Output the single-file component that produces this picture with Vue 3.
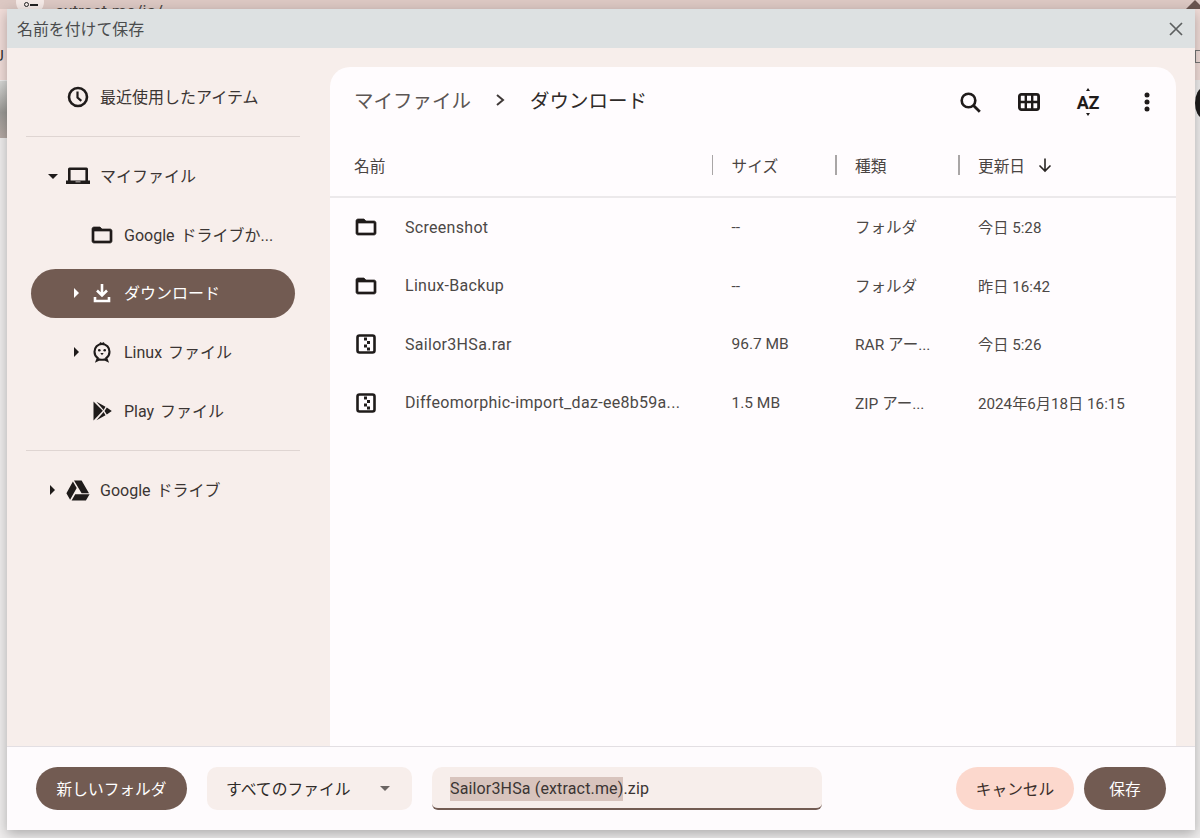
<template>
  <div class="page">
    <!-- browser window behind the dialog -->
    <div class="behind">
      <div class="chrome"></div>
      <div class="url-pill"><span class="url-dot"></span><span class="url-bar"></span></div>
      <div class="url-text">extract.me/ja/</div>
      <div class="left-letter">U</div>
      <div class="left-photo"></div>
      <div class="right-star"></div>
      <div class="right-box"></div>
      <div class="right-bubble"></div>
    </div>

    <div class="dialog">
      <header class="titlebar">
        <span>名前を付けて保存</span>
        <svg class="close" width="16" height="16" viewBox="0 0 16 16">
          <path d="M2 2l12 12M14 2L2 14" stroke="#5c5f60" stroke-width="1.7" fill="none" />
        </svg>
      </header>

      <div class="body">
        <aside class="sidebar">
          <div class="nav-item lvl1">
            <span class="caret"></span>
            <svg class="nav-icon" viewBox="0 0 24 24">
              <circle cx="12" cy="12" r="9" fill="none" stroke="#1f1b1a" stroke-width="2.6" />
              <path d="M11.5 6.500v6l3.800 3.400" fill="none" stroke="#1f1b1a" stroke-width="2.2" />
            </svg>
            <span class="nav-text">最近使用したアイテム</span>
          </div>
          <div class="divider"></div>

          <div class="nav-item lvl1">
            <span class="caret down"></span>
            <svg class="nav-icon" viewBox="0 0 24 24">
              <path fill="#1f1b1a" fill-rule="evenodd" d="M3.500 3.500h17A1.500 1.500 0 0 1 22 5v11.500h2V20H0v-3.500h2V5a1.500 1.500 0 0 1 1.500-1.500zM4.600 6v10.500h14.800V6zM9.500 17.400v.9h5v-.9z" />
            </svg>
            <span class="nav-text">マイファイル</span>
          </div>
          <div class="nav-item lvl2">
            <span class="caret none"></span>
            <svg class="nav-icon" viewBox="0 0 24 24">
              <path fill="#1f1b1a" stroke="#1f1b1a" stroke-width=".7" d="M20 6h-8l-2-2H4c-1.100 0-1.990.9-1.990 2L2 18c0 1.100.9 2 2 2h16c1.100 0 2-.9 2-2V8c0-1.100-.9-2-2-2zm0 12H4V8h16v10z" />
            </svg>
            <span class="nav-text">Google ドライブか...</span>
          </div>
          <div class="nav-item lvl2 active">
            <span class="caret right"></span>
            <svg class="nav-icon" viewBox="0 0 24 24">
              <path d="M12 3v11M7 9.500l5 5 5-5M5 16v4h14v-4" fill="none" stroke="#fff" stroke-width="2.600" />
            </svg>
            <span class="nav-text">ダウンロード</span>
          </div>
          <div class="nav-item lvl2">
            <span class="caret right"></span>
            <svg class="nav-icon" viewBox="0 0 24 24">
              <path d="M12 4c-1 0-1.600-.8-2-1.400M12 4c1 0 1.600-.8 2-1.400M12 4c-4.400 0-7.500 3.400-7.500 7.800 0 2.800 1.300 5 3.300 6.300l-1 2.600 2.900-1.300c1.400.4 3.200.4 4.600 0l2.900 1.300-1-2.600c2-1.300 3.300-3.500 3.300-6.300C19.500 7.400 16.400 4 12 4z" fill="none" stroke="#1f1b1a" stroke-width="2.100" />
              <circle cx="9.300" cy="10.300" r="1.300" fill="#1f1b1a" />
              <circle cx="14.700" cy="10.300" r="1.300" fill="#1f1b1a" />
              <path d="M10.300 13h3.400L12 15.200z" fill="#1f1b1a" />
            </svg>
            <span class="nav-text">Linux ファイル</span>
          </div>
          <div class="nav-item lvl2">
            <span class="caret none"></span>
            <svg class="nav-icon" viewBox="0 0 24 24">
              <path fill="#1f1b1a" d="M3.500 2.500l9.300 9.300-9.300 9.700z" />
              <path fill="#1f1b1a" d="M6.500 2.700l9 5.100-1.900 3.100zM6.500 21.300l9-5.100-1.900-3.100zM16.800 8.600l5 3.400-5 3.400-2.300-3.400z" />
            </svg>
            <span class="nav-text">Play ファイル</span>
          </div>
          <div class="divider"></div>

          <div class="nav-item lvl1">
            <span class="caret right"></span>
            <svg class="nav-icon" viewBox="0 0 24 24">
              <path fill="#1f1b1a" d="M8 2.500h7.600l7.400 12.700h-7.400zM6.900 3.500l3.800 6.600-6.600 11.600L.4 15.300zM9.200 16.300h14.400l-3.700 6.200H5.600z" />
            </svg>
            <span class="nav-text">Google ドライブ</span>
          </div>
        </aside>

        <main class="panel">
          <div class="toolbar">
            <div class="crumbs">
              <span class="crumb-parent">マイファイル</span>
              <svg class="crumb-sep" width="12" height="14" viewBox="0 0 12 14">
                <path d="M2 2l6 5-6 5" fill="none" stroke="#403a38" stroke-width="2" />
              </svg>
              <span class="crumb-current">ダウンロード</span>
            </div>
            <div class="tools">
              <svg class="tool" viewBox="0 0 24 24">
                <circle cx="10.500" cy="10.500" r="6.800" fill="none" stroke="#1f1b1a" stroke-width="2.600" />
                <path d="M15.500 15.500l6.300 6.300" stroke="#1f1b1a" stroke-width="2.800" fill="none" />
              </svg>
              <svg class="tool" viewBox="0 0 24 24">
                <rect x="2.400" y="4.400" width="19.200" height="15.200" rx="2" fill="none" stroke="#1f1b1a" stroke-width="2.800" />
                <path d="M8.800 4v16M15.200 4v16M2 12h20" stroke="#1f1b1a" stroke-width="2.400" fill="none" />
              </svg>
              <div class="tool sort">
                <span class="sort-up"></span>
                <span class="sort-label">AZ</span>
                <span class="sort-down"></span>
              </div>
              <svg class="tool" viewBox="0 0 24 24">
                <circle cx="12" cy="5" r="2.500" fill="#1f1b1a" />
                <circle cx="12" cy="12" r="2.500" fill="#1f1b1a" />
                <circle cx="12" cy="19" r="2.500" fill="#1f1b1a" />
              </svg>
            </div>
          </div>

          <div class="thead">
            <div class="col-name">名前</div>
            <div class="col-size th">サイズ</div>
            <div class="col-type th">種類</div>
            <div class="col-date th">
              更新日
              <svg class="sort-arrow" width="16" height="16" viewBox="0 0 16 16">
                <path d="M8 1.500v12.500M2.500 8.500L8 14l5.500-5.500" fill="none" stroke="#2a2624" stroke-width="1.600" />
              </svg>
            </div>
          </div>

          <div v-for="file in files" :key="file.name" class="row">
            <div class="col-name cell-name">
              <svg v-if="file.folder" class="file-icon" viewBox="0 0 24 24">
                <path fill="#1f1b1a" stroke="#1f1b1a" stroke-width=".7" d="M20 6h-8l-2-2H4c-1.100 0-1.990.9-1.990 2L2 18c0 1.100.9 2 2 2h16c1.100 0 2-.9 2-2V8c0-1.100-.9-2-2-2zm0 12H4V8h16v10z" />
              </svg>
              <svg v-else class="file-icon" viewBox="0 0 24 24">
                <rect x="3.500" y="3.500" width="17" height="17" rx="2" fill="none" stroke="#1f1b1a" stroke-width="2.600" />
                <path d="M10 5.500h3v3h-3zM13 9h3v3h-3zM10 12.500h3v3h-3zM13 15.500h3v3h-3z" fill="#1f1b1a" />
              </svg>
              <span class="file-name">{{ file.name }}</span>
            </div>
            <div class="col-size">{{ file.size }}</div>
            <div class="col-type">{{ file.type }}</div>
            <div class="col-date">{{ file.date }}</div>
          </div>
        </main>
      </div>

      <footer class="footer">
        <button class="btn primary new-folder">新しいフォルダ</button>
        <div class="select">
          <span>すべてのファイル</span>
          <span class="select-arrow"></span>
        </div>
        <div class="filename">
          <span class="selected">Sailor3HSa (extract.me)</span>.zip
        </div>
        <div class="actions">
          <button class="btn cancel">キャンセル</button>
          <button class="btn primary save">保存</button>
        </div>
      </footer>
    </div>
  </div>
</template>

<script setup>
const files = [
  { name: "Screenshot", size: "--", type: "フォルダ", date: "今日 5:28", folder: true },
  { name: "Linux-Backup", size: "--", type: "フォルダ", date: "昨日 16:42", folder: true },
  { name: "Sailor3HSa.rar", size: "96.7 MB", type: "RAR アー...", date: "今日 5:26" },
  { name: "Diffeomorphic-import_daz-ee8b59a...", size: "1.5 MB", type: "ZIP アー...", date: "2024年6月18日 16:15" },
];
</script>

<style>
html,
body {
  margin: 0;
  background: #e9e7e7;
}
</style>

<style scoped>
.page {
  position: relative;
  width: 1200px;
  height: 838px;
  overflow: hidden;
  padding: 9px 5px 0 7px;
  box-sizing: border-box;
  background: #efeded;
  font-family: Roboto, "Noto Sans CJK JP", sans-serif;
  color: #3b3533;
}

/* backdrop pieces, all of them under the dialog */
.behind {
  position: absolute;
  inset: 0;
  overflow: hidden;
}
.chrome {
  position: absolute;
  left: 0;
  top: 0;
  width: 100%;
  height: 80px;
  background: #f0dcd8;
}
.chrome::before {
  content: "";
  position: absolute;
  left: 0;
  top: 0;
  width: 100%;
  height: 9px;
  background: #dcc8c3;
}
.url-pill {
  position: absolute;
  left: 16px;
  top: -10px;
  width: 28px;
  height: 24px;
  border-radius: 12px;
  background: #f4e9e6;
}
.url-dot {
  position: absolute;
  left: 8px;
  top: 12px;
  width: 3px;
  height: 3px;
  border: 1px solid #222;
  border-radius: 50%;
}
.url-bar {
  position: absolute;
  left: 14px;
  top: 14px;
  width: 8px;
  height: 2px;
  background: #222;
}
.url-text {
  position: absolute;
  left: 55px;
  top: 1px;
  font-size: 17px;
  line-height: 20px;
  color: #4b4543;
}
.left-letter {
  position: absolute;
  left: -6px;
  top: 47px;
  font-size: 15px;
  line-height: 18px;
  color: #333;
}
.left-photo {
  position: absolute;
  left: 0;
  top: 81px;
  width: 7px;
  height: 57px;
  background: linear-gradient(#d8d8d6, #9c9a96 55%, #b5a9a4);
}
.right-star {
  position: absolute;
  left: 1186px;
  top: 0;
  width: 0;
  height: 0;
  border-left: 9px solid transparent;
  border-right: 9px solid transparent;
  border-bottom: 9px solid #6a5550;
}
.right-box {
  position: absolute;
  left: 1195px;
  top: 50px;
  width: 8px;
  height: 11px;
  border: 1px solid #777;
}
.right-bubble {
  position: absolute;
  left: 1195px;
  top: 88px;
  width: 16px;
  height: 30px;
  border-radius: 50%;
  background: #1e1c1c;
}

.dialog {
  position: relative;
  width: 1188px;
  height: 821px;
  display: flex;
  flex-direction: column;
  background: #f7eeeb;
  box-shadow: 0 4px 12px rgba(0, 0, 0, 0.28);
}

.titlebar {
  flex: none;
  height: 39px;
  padding: 0 11px 0 10px;
  display: flex;
  align-items: center;
  justify-content: space-between;
  background: #dde1e2;
  font-size: 15.9px;
  color: #4a4c4d;
}

.body {
  flex: 1;
  min-height: 0;
  display: flex;
  padding-right: 19px;
}

/* sidebar */
.sidebar {
  flex: none;
  width: 323px;
  box-sizing: border-box;
  padding: 24.5px 0 0 24px;
  font-size: 16px;
}
.nav-item {
  width: 264px;
  height: 49px;
  margin-bottom: 9.67px;
  display: flex;
  align-items: center;
  border-radius: 25px;
  box-sizing: border-box;
}
.lvl1 {
  padding-left: 17px;
}
.lvl2 {
  padding-left: 41px;
}
.active {
  background: #725b52;
  color: #fff;
}
.caret {
  flex: none;
  width: 10px;
  height: 10px;
  position: relative;
}
.caret.down::after {
  content: "";
  position: absolute;
  left: 0;
  top: 3px;
  border-left: 5px solid transparent;
  border-right: 5px solid transparent;
  border-top: 5px solid #1f1b1a;
}
.caret.right::after {
  content: "";
  position: absolute;
  left: 2px;
  top: 0;
  border-top: 5px solid transparent;
  border-bottom: 5px solid transparent;
  border-left: 5px solid #1f1b1a;
}
.active .caret.right::after {
  border-left-color: #fff;
}
.nav-icon {
  flex: none;
  width: 24px;
  height: 24px;
  margin: 0 10px 0 8px;
}
.nav-text {
  padding-bottom: 2px;
  word-spacing: 2px;
  white-space: nowrap;
}
.divider {
  width: 274px;
  height: 1px;
  margin: 14.5px 0 14.5px -5px;
  background: #dfd5d2;
}

/* main panel */
.panel {
  flex: 1;
  min-width: 0;
  margin-top: 19px;
  border-radius: 20px 20px 0 0;
  background: #fffcfe;
}
.toolbar {
  height: 66px;
  display: flex;
  align-items: center;
  justify-content: space-between;
  padding: 0 17px 0 24px;
}
.crumbs {
  display: flex;
  align-items: center;
  padding-bottom: 2px;
  font-size: 19.5px;
}
.crumb-parent {
  color: #5c5654;
}
.crumb-sep {
  margin: 2px 23px 0 24px;
}
.crumb-current {
  color: #2e2a28;
}
.tools {
  display: flex;
  align-items: center;
  gap: 35px;
  padding-top: 4px;
}
.tool {
  width: 24px;
  height: 24px;
}
.sort {
  position: relative;
  display: flex;
  align-items: center;
  justify-content: center;
}
.sort-label {
  font-size: 18px;
  font-weight: 700;
  letter-spacing: -0.3px;
  color: #1f1b1a;
}
.sort-up,
.sort-down {
  position: absolute;
  left: 9.5px;
  border-left: 2.5px solid transparent;
  border-right: 2.5px solid transparent;
}
.sort-up {
  top: -2px;
  border-bottom: 3px solid #1f1b1a;
}
.sort-down {
  bottom: -2px;
  border-top: 3px solid #1f1b1a;
}

.thead,
.row {
  display: grid;
  grid-template-columns: 381.5px 123.5px 123px 1fr;
  align-items: center;
}
.thead {
  height: 61.5px;
  padding-top: 1.5px;
  border-bottom: 2px solid #ece9eb;
  font-size: 15.7px;
  color: #4a4442;
}
.row {
  height: 58.5px;
  font-size: 15.5px;
  color: #4c4846;
}
.col-name {
  padding-left: 24px;
}
.col-size,
.col-type,
.col-date {
  padding-left: 20px;
  white-space: nowrap;
}
.row .col-type,
.row .col-date {
  padding-bottom: 2px;
}
.row .col-date {
  font-size: 15.2px;
}
.th {
  position: relative;
  display: flex;
  align-items: center;
}
.th::before {
  content: "";
  position: absolute;
  left: 0;
  top: 50%;
  width: 1.5px;
  height: 20px;
  margin-top: -10px;
  background: #a9a6a6;
}
.sort-arrow {
  margin-left: 12px;
}
.cell-name {
  display: flex;
  align-items: center;
}
.file-icon {
  flex: none;
  width: 24px;
  height: 24px;
  margin-right: 27px;
}
.file-name {
  font-size: 16px;
  letter-spacing: 0.3px;
  white-space: nowrap;
}

/* footer */
.footer {
  flex: none;
  height: 84px;
  box-sizing: border-box;
  padding: 20px 29px 0 29px;
  display: flex;
  align-items: flex-start;
  background: #fefbfd;
  border-top: 1px solid #e3dfe3;
}
.btn {
  height: 43px;
  padding: 0;
  border: 0;
  border-radius: 22px;
  font: inherit;
  font-size: 15.7px;
}
.primary {
  background: #725b52;
  color: #fff;
}
.new-folder {
  width: 151px;
}
.select {
  width: 205px;
  height: 43px;
  margin-left: 20px;
  padding: 0 22px 0 19px;
  box-sizing: border-box;
  display: flex;
  align-items: center;
  justify-content: space-between;
  border-radius: 10px;
  background: #f7eeeb;
  font-size: 15.8px;
  color: #2e2a28;
}
.select-arrow {
  border-left: 5px solid transparent;
  border-right: 5px solid transparent;
  border-top: 5px solid #6b6563;
}
.filename {
  width: 390px;
  height: 43px;
  margin-left: 20px;
  padding: 2px 0 0 18px;
  box-sizing: border-box;
  display: flex;
  align-items: center;
  border-radius: 10px 10px 6px 6px;
  border-bottom: 2px solid #725b52;
  background: #f7eeeb;
  font-size: 16px;
  letter-spacing: 0.15px;
  color: #3b3533;
  white-space: pre;
}
.selected {
  line-height: 24px;
  background: #d8c4bd;
}
.actions {
  margin-left: auto;
  display: flex;
  gap: 10px;
}
.cancel {
  width: 118px;
  background: #fcd8cd;
  color: #3a2e2a;
}
.save {
  width: 82px;
}
</style>
